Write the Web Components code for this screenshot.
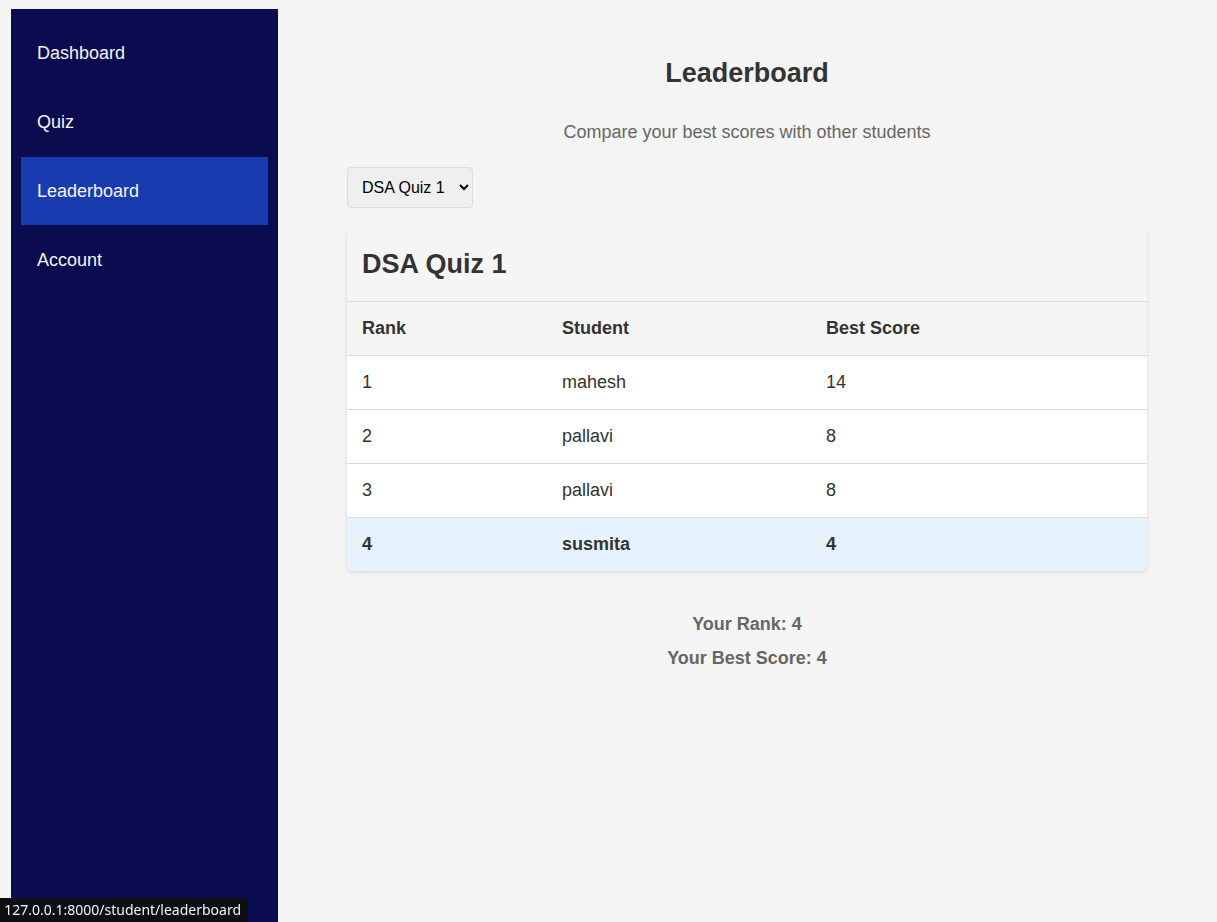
<!DOCTYPE html>
<html lang="en">
<head>
<meta charset="utf-8">
<meta name="viewport" content="width=device-width, initial-scale=1">
<title>Leaderboard</title>
<style>
  body { margin: 0; background: #f4f4f4; color: #333; font: 18px/24px "Liberation Sans", Arial, sans-serif; }
</style>
</head>
<body>
<student-app>
  <side-nav slot="nav">
    <nav-item href="#dashboard">Dashboard</nav-item>
    <nav-item href="#quiz">Quiz</nav-item>
    <nav-item href="#leaderboard" current>Leaderboard</nav-item>
    <nav-item href="#account">Account</nav-item>
  </side-nav>
  <page-heading heading="Leaderboard">Compare your best scores with other students</page-heading>
  <quiz-picker></quiz-picker>
  <score-table heading="DSA Quiz 1"></score-table>
  <score-summary><span>Your Rank: 4</span><span>Your Best Score: 4</span></score-summary>
</student-app>
<link-status>127.0.0.1:8000/student/leaderboard</link-status>

<script>
const define = (name, markup, setup) => {
  customElements.define(name, class extends HTMLElement {
    constructor() {
      super();
      this.attachShadow({ mode: "open" });
    }
    connectedCallback() {
      this.shadowRoot.innerHTML = markup;
      if (setup) setup(this, this.shadowRoot);
    }
  });
};

define("student-app", `
  <style>
    :host { display: flex; box-sizing: border-box; min-height: 100vh; padding: 9px 1px 0 11px; }
    main { flex: 1; min-width: 0; padding: 48px 24px 24px; }
    .column { max-width: 800px; margin: 0 auto; }
  </style>
  <slot name="nav"></slot>
  <main><div class="column"><slot></slot></div></main>`);

define("side-nav", `
  <style>
    :host { display: block; flex: none; box-sizing: border-box; width: 267px; padding: 10px; background: #0b0b50; }
    nav { display: flex; flex-direction: column; gap: 1px; }
  </style>
  <nav aria-label="Main"><slot></slot></nav>`);

define("nav-item", `
  <style>
    :host { display: block; }
    a { display: block; padding: 22px 16px; color: #f4f4f4; text-decoration: none; }
    :host([current]) a { background: #193bb0; }
  </style>
  <a><slot></slot></a>`, (host, root) => {
    const a = root.querySelector("a");
    a.href = host.getAttribute("href");
    if (host.hasAttribute("current")) a.setAttribute("aria-current", "page");
  });

define("page-heading", `
  <style>
    :host { display: block; text-align: center; }
    h1 { margin: 0 0 31px; font-size: 27px; line-height: 32px; }
    p { margin: 0 0 23px; color: #666; }
  </style>
  <h1></h1><p><slot></slot></p>`, (host, root) => {
    root.querySelector("h1").textContent = host.getAttribute("heading");
  });

define("quiz-picker", `
  <style>
    :host { display: flex; margin-bottom: 20px; }
    select { height: 41px; padding: 0 10px; border: 1px solid #ddd; border-radius: 4px; background: #efefef; color: #000; font: 16px "Liberation Sans", Arial, sans-serif; }
  </style>
  <select aria-label="Quiz"><option>DSA Quiz 1</option></select>`);

define("score-table", `
  <style>
    :host { display: block; margin-bottom: 20px; border-radius: 7px; overflow: hidden; background: #fff; box-shadow: 0 2px 4px rgba(0,0,0,.1); }
    h2 { margin: 0; padding: 20px 15px 21px; border-bottom: 1px solid #ddd; background: #f5f5f5; font-size: 27px; line-height: 32px; }
    table { width: 100%; border-collapse: separate; border-spacing: 0; table-layout: fixed; }
    th, td { box-sizing: border-box; padding: 14px 15px 15px; border-bottom: 1px solid #ddd; text-align: left; }
    th { background: #f5f5f5; }
    th:nth-child(1) { width: 25%; }
    th:nth-child(2) { width: 33%; }
    tbody tr:last-child td { border-bottom: 0; }
    .me td { background: #e6f2fe; font-weight: bold; }
  </style>
  <h2></h2>
  <table>
    <thead><tr><th scope="col">Rank</th><th scope="col">Student</th><th scope="col">Best Score</th></tr></thead>
    <tbody>
      <tr><td>1</td><td>mahesh</td><td>14</td></tr>
      <tr><td>2</td><td>pallavi</td><td>8</td></tr>
      <tr><td>3</td><td>pallavi</td><td>8</td></tr>
      <tr class="me"><td>4</td><td>susmita</td><td>4</td></tr>
    </tbody>
  </table>`, (host, root) => {
    root.querySelector("h2").textContent = host.getAttribute("heading");
  });

define("score-summary", `
  <style>
    :host { display: flex; flex-direction: column; align-items: center; gap: 10px; padding: 21px 15px; border-radius: 7px; background: #f5f5f5; color: #666; font-weight: bold; }
  </style>
  <slot></slot>`);

/* Address of the hovered link, anchored to the window's bottom corner. */
define("link-status", `
  <style>
    :host { position: fixed; left: 0; bottom: 0; display: flex; justify-content: flex-end; box-sizing: border-box; width: 248px; height: 24px; padding-right: 7px; overflow: hidden; border-top-right-radius: 4px; background: #0e0f14; color: #f3f3f3; font: 14px/24px "Noto Sans", sans-serif; white-space: nowrap; }
  </style>
  <slot></slot>`);
</script>
</body>
</html>
